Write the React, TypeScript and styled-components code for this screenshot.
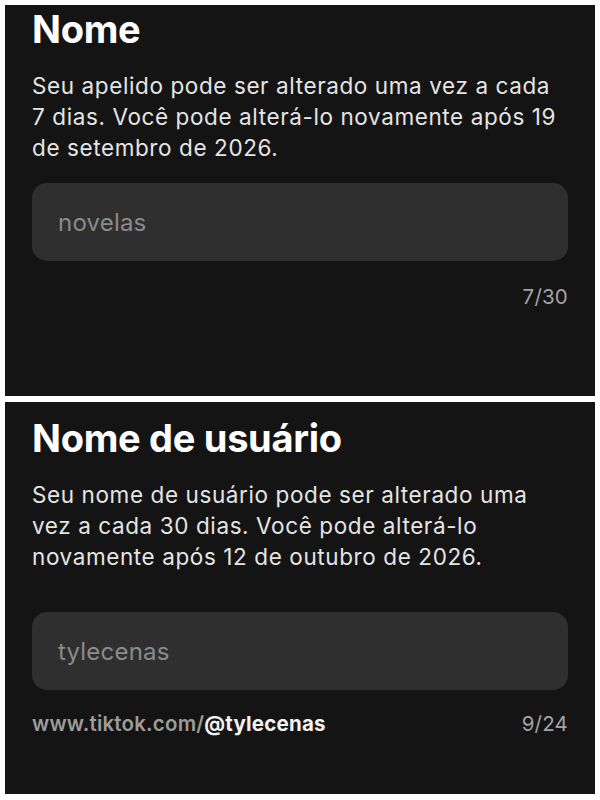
import styled, { createGlobalStyle } from 'styled-components'

const GlobalStyle = createGlobalStyle`
  html, body {
    margin: 0;
    padding: 0;
    background: #ffffff;
  }
  body {
    font-family: Inter, "Liberation Sans", Arial, sans-serif;
    -webkit-font-smoothing: antialiased;
  }
`

const Page = styled.main`
  display: flex;
  flex-direction: column;
  gap: 6px;
  padding: 5px 5px 6px;
  width: 600px;
  box-sizing: border-box;
`

const Panel = styled.section<{ $height: number; $top: number }>`
  height: ${(p) => p.$height}px;
  box-sizing: border-box;
  background: #141414;
  padding: ${(p) => p.$top}px 27px 0 27px;
  display: flex;
  flex-direction: column;
`

const Title = styled.h1`
  margin: 0;
  font-size: 38px;
  font-weight: 700;
  line-height: 44px;
  color: #ffffff;
  letter-spacing: -0.3px;
`

const Desc = styled.p`
  margin: 19px 0 0;
  font-size: 22.5px;
  line-height: 31px;
  letter-spacing: 0.6px;
  color: #e4e4e4;
  font-weight: 400;
`

const Field = styled.div<{ $gap: number }>`
  margin-top: ${(p) => p.$gap}px;
  height: 78px;
  flex-shrink: 0;
  border-radius: 15px;
  background: #2f2f2f;
  display: flex;
  align-items: center;
  padding: 0 26px;
  font-size: 24px;
  letter-spacing: 0.2px;
  color: #8b8b8b;
`

const Footer = styled.div<{ $gap: number }>`
  margin-top: ${(p) => p.$gap}px;
  display: flex;
  justify-content: space-between;
  align-items: center;
  font-size: 20.5px;
  line-height: 24px;
  letter-spacing: 0.2px;
`

const Link = styled.span`
  color: #9c9c9c;
  font-weight: 600;

  b {
    color: #f2f2f2;
    font-weight: 700;
  }
`

const Counter = styled.span`
  margin-left: auto;
  color: #a3a3a3;
`

export default function App() {
  return (
    <>
      <GlobalStyle />
      <Page>
        <Panel $height={391} $top={2}>
          <Title>Nome</Title>
          <Desc>
            Seu apelido pode ser alterado uma vez a cada 7&nbsp;dias. Você pode
            alterá-lo novamente após 19 de setembro de 2026.
          </Desc>
          <Field $gap={20}>novelas</Field>
          <Footer $gap={24}>
            <Counter>7/30</Counter>
          </Footer>
        </Panel>
        <Panel $height={392} $top={14}>
          <Title>Nome de usuário</Title>
          <Desc>
            Seu nome de usuário pode ser alterado uma vez a cada 30 dias. Você
            pode alterá-lo novamente após 12 de outubro de 2026.
          </Desc>
          <Field $gap={40}>tylecenas</Field>
          <Footer $gap={22}>
            <Link>
              www.tiktok.com/<b>@tylecenas</b>
            </Link>
            <Counter>9/24</Counter>
          </Footer>
        </Panel>
      </Page>
    </>
  )
}
